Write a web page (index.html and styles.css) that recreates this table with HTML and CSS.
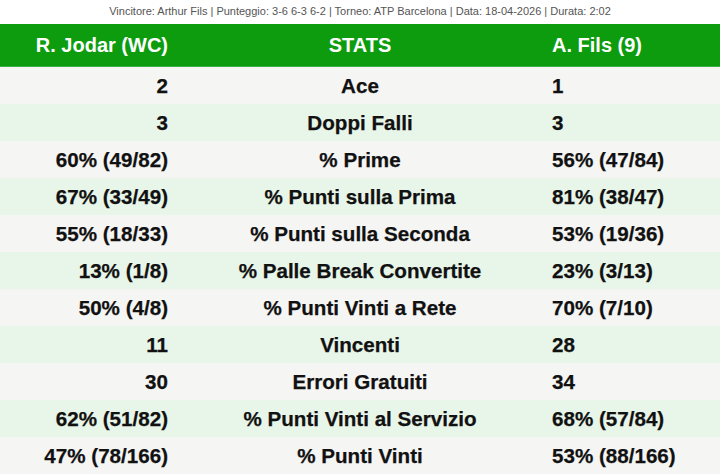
FILE: index.html
```html
<!DOCTYPE html>
<html lang="it">
<head>
<meta charset="utf-8">
<title>Statistiche partita</title>
<link rel="stylesheet" href="styles.css">
</head>
<body>
<div class="caption">Vincitore: Arthur Fils | Punteggio: 3-6 6-3 6-2 | Torneo: ATP Barcelona | Data: 18-04-2026 | Durata: 2:02</div>
<table class="stats">
  <thead>
    <tr><th class="left">R. Jodar (WC)</th><th class="mid">STATS</th><th class="right">A. Fils (9)</th></tr>
  </thead>
  <tbody>
    <tr><td class="left">2</td><td class="mid">Ace</td><td class="right">1</td></tr>
    <tr><td class="left">3</td><td class="mid">Doppi Falli</td><td class="right">3</td></tr>
    <tr><td class="left">60% (49/82)</td><td class="mid">% Prime</td><td class="right">56% (47/84)</td></tr>
    <tr><td class="left">67% (33/49)</td><td class="mid">% Punti sulla Prima</td><td class="right">81% (38/47)</td></tr>
    <tr><td class="left">55% (18/33)</td><td class="mid">% Punti sulla Seconda</td><td class="right">53% (19/36)</td></tr>
    <tr><td class="left">13% (1/8)</td><td class="mid">% Palle Break Convertite</td><td class="right">23% (3/13)</td></tr>
    <tr><td class="left">50% (4/8)</td><td class="mid">% Punti Vinti a Rete</td><td class="right">70% (7/10)</td></tr>
    <tr><td class="left">11</td><td class="mid">Vincenti</td><td class="right">28</td></tr>
    <tr><td class="left">30</td><td class="mid">Errori Gratuiti</td><td class="right">34</td></tr>
    <tr><td class="left">62% (51/82)</td><td class="mid">% Punti Vinti al Servizio</td><td class="right">68% (57/84)</td></tr>
    <tr><td class="left">47% (78/166)</td><td class="mid">% Punti Vinti</td><td class="right">53% (88/166)</td></tr>
  </tbody>
</table>
</body>
</html>
```
FILE: styles.css
```css
html, body {
  margin: 0;
  padding: 0;
  background: #ffffff;
}
body {
  width: 720px;
  height: 476px;
  overflow: hidden;
  font-family: "Liberation Sans", Arial, sans-serif;
}
.caption {
  height: 24px;
  line-height: 22px;
  text-align: center;
  font-family: "Liberation Sans Narrow", "Arial Narrow", "Liberation Sans", sans-serif;
  font-size: 11px;
  color: #555555;
  white-space: nowrap;
}
.stats {
  width: 720px;
  border-collapse: collapse;
  table-layout: fixed;
}
.stats th, .stats td {
  padding: 0 12px;
  white-space: nowrap;
}
.stats th {
  height: 42px;
  background: #0c9c0e;
  color: #ffffff;
  font-size: 20px;
  font-weight: bold;
  border-bottom: 1px solid #3cb040;
}
.stats td {
  height: 37px;
  font-size: 20.6px;
  font-weight: bold;
  color: #111111;
  -webkit-text-stroke: 0.25px #111111;
}
.stats tbody tr:nth-child(odd) td { background: #f5f5f4; }
.stats tbody tr:nth-child(even) td { background: #e8f5e9; }
.left { text-align: right; }
.mid { text-align: center; }
.right { text-align: left; }
.stats th.left, .stats td.left { width: 156px; }
.stats th.mid, .stats td.mid { width: 336px; }
.stats th.right, .stats td.right { width: 156px; }
```
